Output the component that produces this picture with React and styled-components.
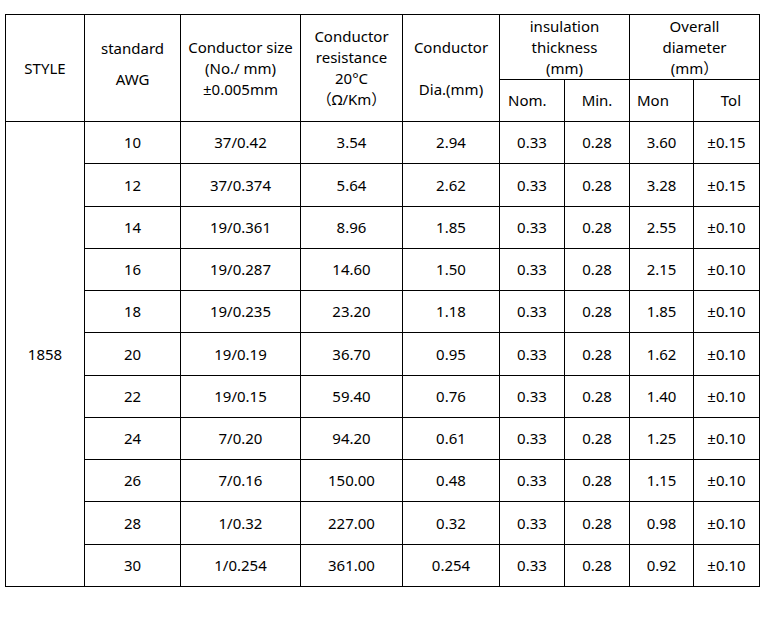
import React from "react";
import styled, { createGlobalStyle } from "styled-components";

const Global = createGlobalStyle`
  html, body { margin: 0; padding: 0; background: #fff; }
  body { font-family: "Noto Sans", "Noto Sans CJK KR", sans-serif; color: #000; }
`;

const Page = styled.div`
  padding: 14px 0 0 5px;
`;

const Table = styled.table`
  border-collapse: collapse;
  table-layout: fixed;
  width: 754px;
  font-size: 15px;
  line-height: 21px;
`;

const HeadCell = styled.th`
  border: 1px solid #000;
  font-weight: normal;
  padding: 0 ${(p) => (p.$pad != null ? p.$pad : 2)}px ${(p) => p.$pb || 0}px;
  text-align: ${(p) => p.$align || "center"};
  vertical-align: middle;
  height: ${(p) => p.$h || 0}px;
  line-height: ${(p) => p.$lh || 21}px;
  box-sizing: border-box;
`;

const Row = styled.tr`
  height: ${(p) => p.$h}px;
`;

const Cell = styled.td`
  border: 1px solid #000;
  padding: 0;
  text-align: center;
  vertical-align: middle;
  box-sizing: border-box;
`;

const widths = [79, 96, 120, 102, 97, 65, 65, 64, 66];

const rows = [
  ["10", "37/0.42", "3.54", "2.94", "0.33", "0.28", "3.60", "±0.15"],
  ["12", "37/0.374", "5.64", "2.62", "0.33", "0.28", "3.28", "±0.15"],
  ["14", "19/0.361", "8.96", "1.85", "0.33", "0.28", "2.55", "±0.10"],
  ["16", "19/0.287", "14.60", "1.50", "0.33", "0.28", "2.15", "±0.10"],
  ["18", "19/0.235", "23.20", "1.18", "0.33", "0.28", "1.85", "±0.10"],
  ["20", "19/0.19", "36.70", "0.95", "0.33", "0.28", "1.62", "±0.10"],
  ["22", "19/0.15", "59.40", "0.76", "0.33", "0.28", "1.40", "±0.10"],
  ["24", "7/0.20", "94.20", "0.61", "0.33", "0.28", "1.25", "±0.10"],
  ["26", "7/0.16", "150.00", "0.48", "0.33", "0.28", "1.15", "±0.10"],
  ["28", "1/0.32", "227.00", "0.32", "0.33", "0.28", "0.98", "±0.10"],
  ["30", "1/0.254", "361.00", "0.254", "0.33", "0.28", "0.92", "±0.10"],
];

const BODY_H = 465;
const rowHeight = (i) =>
  Math.round(((i + 1) * BODY_H) / rows.length) - Math.round((i * BODY_H) / rows.length);

export default function App() {
  return (
    <Page>
      <Global />
      <Table>
        <colgroup>
          {widths.map((w, i) => (
            <col key={i} style={{ width: w }} />
          ))}
        </colgroup>
        <thead>
          <tr>
            <HeadCell rowSpan={2}>STYLE</HeadCell>
            <HeadCell rowSpan={2} $lh={31} $pb={9}>
              standard
              <br />
              AWG
            </HeadCell>
            <HeadCell rowSpan={2}>
              Conductor size
              <br />
              (No./ mm)
              <br />
              ±0.005mm
            </HeadCell>
            <HeadCell rowSpan={2}>
              Conductor
              <br />
              resistance
              <br />
              20°C
              <br />（Ω/Km）
            </HeadCell>
            <HeadCell rowSpan={2}>
              Conductor
              <br />
              <br />
              Dia.(mm)
            </HeadCell>
            <HeadCell colSpan={2} $h={65}>
              insulation
              <br />
              thickness
              <br />
              (mm)
            </HeadCell>
            <HeadCell colSpan={2} $h={65}>
              Overall
              <br />
              diameter
              <br />
              (mm）
            </HeadCell>
          </tr>
          <tr>
            <HeadCell $h={42} $align="left" $pad={8}>Nom.</HeadCell>
            <HeadCell $h={42}>Min.</HeadCell>
            <HeadCell $h={42} $align="left" $pad={7}>Mon</HeadCell>
            <HeadCell $h={42} $align="right" $pad={18}>Tol</HeadCell>
          </tr>
        </thead>
        <tbody>
          {rows.map((r, i) => (
            <Row key={i} $h={rowHeight(i)}>
              {i === 0 && <Cell rowSpan={rows.length}>1858</Cell>}
              {r.map((v, j) => (
                <Cell key={j}>{v}</Cell>
              ))}
            </Row>
          ))}
        </tbody>
      </Table>
    </Page>
  );
}
